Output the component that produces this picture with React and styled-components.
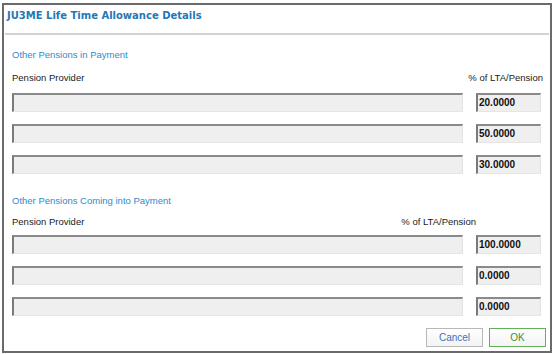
import React from "react";
import styled, { createGlobalStyle } from "styled-components";

const GlobalStyle = createGlobalStyle`
  html, body {
    margin: 0;
    padding: 0;
    background: #ffffff;
  }
  body {
    font-family: "Liberation Sans", Arial, sans-serif;
  }
`;

const sections = [
  {
    id: "in",
    title: "Other Pensions in Payment",
    headRight: -2,
    values: ["20.0000", "50.0000", "30.0000"],
    titleGap: 14,
    headGap: 11,
    rowGap: 9,
  },
  {
    id: "coming",
    title: "Other Pensions Coming into Payment",
    headRight: 65,
    values: ["100.0000", "0.0000", "0.0000"],
    titleGap: 21,
    headGap: 9,
    rowGap: 7,
  },
];

const Dialog = styled.div`
  box-sizing: border-box;
  width: 550px;
  height: 350px;
  margin: 3px 0 0 2px;
  border: 2px solid #6a6a6a;
  background: #ffffff;
  display: flex;
  flex-direction: column;
`;

const Header = styled.div`
  height: 28px;
  box-sizing: border-box;
  padding: 4px 0 0 3px;
`;

const Title = styled.h1`
  margin: 0;
  font-family: "DejaVu Sans", Verdana, sans-serif;
  font-weight: bold;
  font-size: 10px;
  line-height: 14px;
  color: #1f78b8;
`;

const Separator = styled.div`
  height: 2px;
  margin: 0 1px;
  background: #d2d2d2;
`;

const Body = styled.div`
  padding: 0 9px 0 8px;
  display: flex;
  flex-direction: column;
`;

const SectionTitle = styled.div`
  margin-top: ${(p) => p.$gap}px;
  font-size: 9.5px;
  line-height: 12px;
  color: #2d8ccb;
`;

const ColumnHeads = styled.div`
  margin-top: ${(p) => p.$gap}px;
  margin-right: ${(p) => p.$right}px;
  display: flex;
  justify-content: space-between;
  font-size: 9.5px;
  line-height: 12px;
  color: #1a1a1a;
`;

const Rows = styled.div`
  margin-top: ${(p) => p.$gap}px;
  display: flex;
  flex-direction: column;
  gap: 12px;
`;

const Row = styled.div`
  display: grid;
  grid-template-columns: 451px 65px;
  justify-content: space-between;
  height: 19px;
`;

const Field = styled.div`
  box-sizing: border-box;
  height: 19px;
  background: #efefef;
  border-top: 2px solid #8a8a8a;
  border-left: 2px solid #7a7a7a;
  border-right: 1px solid #e2e2e2;
  border-bottom: 1px solid #e6e6e6;
  padding-left: 1px;
  font-weight: bold;
  font-size: 10px;
  line-height: 16px;
  color: #111111;
`;

const Footer = styled.div`
  margin: 12px -5px 0 0;
  display: flex;
  justify-content: flex-end;
  gap: 6px;
`;

const Button = styled.button`
  box-sizing: border-box;
  width: 57px;
  height: 19px;
  padding: 0;
  font-family: "Liberation Sans", Arial, sans-serif;
  font-size: 10px;
  background: linear-gradient(#ffffff, #f3f3f3);
  border: 1px solid ${(p) => (p.$primary ? "#63b05a" : "#b8b8b8")};
  color: ${(p) => (p.$primary ? "#3d8f38" : "#3b73c0")};
`;

export default function App() {
  return (
    <>
      <GlobalStyle />
      <Dialog>
        <Header>
          <Title>JU3ME Life Time Allowance Details</Title>
        </Header>
        <Separator />
        <Body>
          {sections.map((s) => (
            <React.Fragment key={s.id}>
              <SectionTitle $gap={s.titleGap}>{s.title}</SectionTitle>
              <ColumnHeads $gap={s.headGap} $right={s.headRight}>
                <span>Pension Provider</span>
                <span>% of LTA/Pension</span>
              </ColumnHeads>
              <Rows $gap={s.rowGap}>
                {s.values.map((v, i) => (
                  <Row key={i}>
                    <Field />
                    <Field>{v}</Field>
                  </Row>
                ))}
              </Rows>
            </React.Fragment>
          ))}
          <Footer>
            <Button>Cancel</Button>
            <Button $primary>OK</Button>
          </Footer>
        </Body>
      </Dialog>
    </>
  );
}
